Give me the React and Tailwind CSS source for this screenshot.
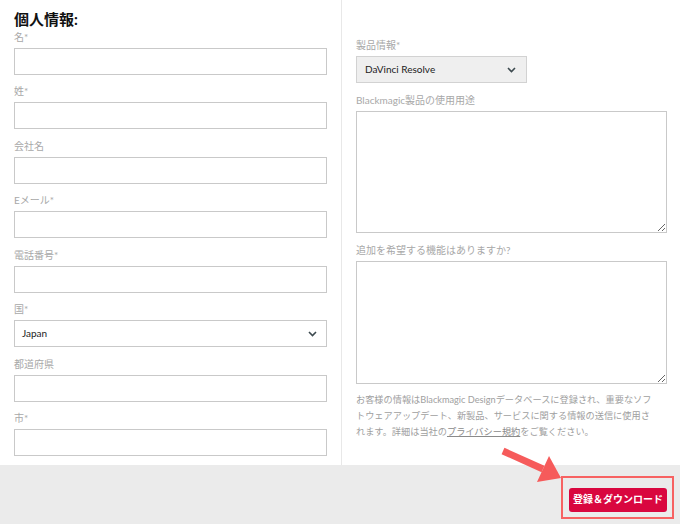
import React from 'react'

const font = { fontFamily: 'Lato, "Noto Sans CJK JP", sans-serif' }

function Chevron({ className = '' }) {
  return (
    <svg width="9" height="6" viewBox="0 0 9 6" className={className}>
      <polyline points="1,1 4.5,4.5 8,1" fill="none" stroke="#3d4a4f" strokeWidth="1.6" />
    </svg>
  )
}

function Label({ children }) {
  return <div className="text-[10px] leading-[14px] text-[#a8a8a8] mb-[4px]">{children}</div>
}

function Field({ label, select }) {
  return (
    <div>
      <Label>{label}</Label>
      {select ? (
        <div className="h-[27px] border border-[#c9c9c9] bg-white flex items-center justify-between pl-[7px] pr-[9px]">
          <span className="text-[10px] text-[#222]">{select}</span>
          <Chevron />
        </div>
      ) : (
        <input className="block w-full h-[27px] border border-[#c9c9c9] bg-white outline-none" />
      )}
    </div>
  )
}

export default function App() {
  const left = [
    { label: '名*' },
    { label: '姓*' },
    { label: '会社名' },
    { label: 'Eメール*' },
    { label: '電話番号*' },
    { label: '国*', select: 'Japan' },
    { label: '都道府県' },
    { label: '市*' },
  ]

  return (
    <div className="relative w-[680px] h-[524px] bg-white overflow-hidden" style={font}>
      <div className="flex h-[465px]">
        {/* left column */}
        <div className="w-[342px] shrink-0 border-r border-[#e8e8e8] pl-[14px] pr-[14px] pt-[8px]">
          <h2 className="text-[15px] leading-[22px] font-bold text-[#111]">個人情報:</h2>
          <div className="flex flex-col gap-[9.43px]">
            {left.map(f => <Field key={f.label} {...f} />)}
          </div>
        </div>

        {/* right column */}
        <div className="flex-1 min-w-0 pl-[14px] pr-[13px] pt-[38px]">
          <Label>製品情報*</Label>
          <div className="w-[171px] h-[27px] border border-[#d2d2d2] bg-[#efefef] flex items-center justify-between pl-[8px] pr-[10px]">
            <span className="text-[10px] text-[#222]">DaVinci Resolve</span>
            <Chevron />
          </div>

          <div className="mt-[10px]">
            <Label>Blackmagic製品の使用用途</Label>
            <textarea className="block w-full h-[122px] border border-[#c9c9c9] outline-none" />
          </div>

          <div className="mt-[10px]">
            <Label>追加を希望する機能はありますか?</Label>
            <textarea className="block w-full h-[123px] border border-[#c9c9c9] outline-none" />
          </div>

          <p className="mt-[8px] text-[9.2px] leading-[16px] text-[#a0a0a0] whitespace-nowrap">
            お客様の情報はBlackmagic Designデータベースに登録され、重要なソフ<br />
            トウェアアップデート、新製品、サービスに関する情報の送信に使用さ<br />
            れます。詳細は当社の<span className="underline text-[#8a8a8a]">プライバシー規約</span>をご覧ください。
          </p>
        </div>
      </div>

      {/* bottom bar */}
      <div className="h-[59px] bg-[#ebebeb] flex justify-end items-start pt-[11px] pr-[6px]">
        <div className="border-2 border-[#f76262] pl-[6px] pr-[5px] pt-[7px] pb-[5px]">
          <button className="h-[24px] w-[98px] rounded-[3px] bg-[#d9073f] text-white text-[10px] font-bold">
            登録＆ダウンロード
          </button>
        </div>
      </div>

      {/* annotation arrow */}
      <svg className="absolute left-0 top-0 pointer-events-none" width="680" height="524">
        <line x1="503" y1="451" x2="543" y2="469" stroke="#f65b5b" strokeWidth="7" />
        <polygon points="561,478 537,482 549,456" fill="#f65b5b" />
      </svg>
    </div>
  )
}
